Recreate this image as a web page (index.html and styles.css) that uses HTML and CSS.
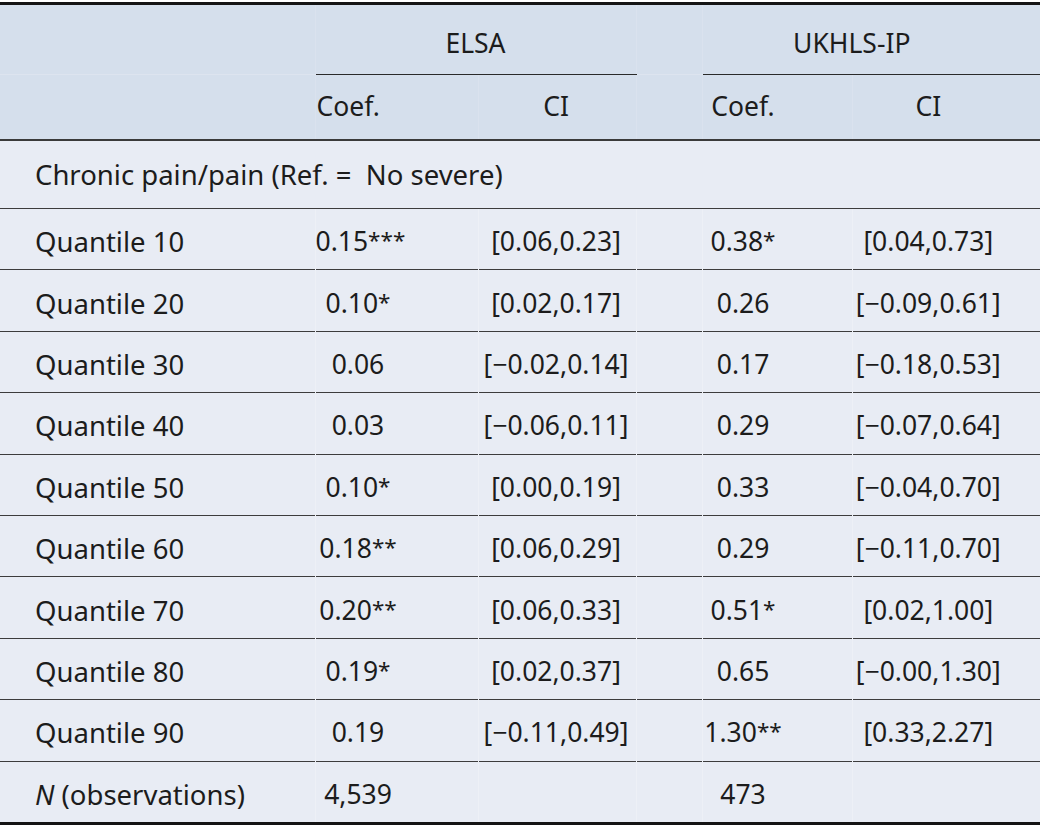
FILE: index.html
```html
<!DOCTYPE html>
<html lang="en">
<head>
<meta charset="utf-8">
<title>Quantile regression table</title>
<link rel="stylesheet" href="styles.css">
</head>
<body>
<div class="wrap">
<table class="qt">
  <colgroup>
    <col class="c-label">
    <col class="c-coef1">
    <col class="c-ci1">
    <col class="c-gap">
    <col class="c-coef2">
    <col class="c-ci2">
  </colgroup>
  <thead>
    <tr class="h1">
      <th class="blank"></th>
      <th class="grp grp1" colspan="2">ELSA</th>
      <th class="gap"></th>
      <th class="grp grp2" colspan="2">UKHLS-IP</th>
    </tr>
    <tr class="h2">
      <th class="blank"></th>
      <th class="coef1 hcoef1">Coef.</th>
      <th class="ci1">CI</th>
      <th class="gap"></th>
      <th class="coef2">Coef.</th>
      <th class="ci2 hci2">CI</th>
    </tr>
  </thead>
  <tbody>
    <tr class="section">
      <td class="label" colspan="6">Chronic pain/pain (Ref. =&nbsp; No severe)</td>
    </tr>
    <tr><td class="label">Quantile 10</td><td class="coef1">0.15<span class="sig">***</span></td><td class="ci1">[0.06,0.23]</td><td class="gap"></td><td class="coef2">0.38<span class="sig">*</span></td><td class="ci2">[0.04,0.73]</td></tr>
    <tr><td class="label">Quantile 20</td><td class="coef1">0.10<span class="sig">*</span></td><td class="ci1">[0.02,0.17]</td><td class="gap"></td><td class="coef2">0.26</td><td class="ci2">[−0.09,0.61]</td></tr>
    <tr><td class="label">Quantile 30</td><td class="coef1">0.06</td><td class="ci1">[−0.02,0.14]</td><td class="gap"></td><td class="coef2">0.17</td><td class="ci2">[−0.18,0.53]</td></tr>
    <tr><td class="label">Quantile 40</td><td class="coef1">0.03</td><td class="ci1">[−0.06,0.11]</td><td class="gap"></td><td class="coef2">0.29</td><td class="ci2">[−0.07,0.64]</td></tr>
    <tr><td class="label">Quantile 50</td><td class="coef1">0.10<span class="sig">*</span></td><td class="ci1">[0.00,0.19]</td><td class="gap"></td><td class="coef2">0.33</td><td class="ci2">[−0.04,0.70]</td></tr>
    <tr><td class="label">Quantile 60</td><td class="coef1">0.18<span class="sig">**</span></td><td class="ci1">[0.06,0.29]</td><td class="gap"></td><td class="coef2">0.29</td><td class="ci2">[−0.11,0.70]</td></tr>
    <tr><td class="label">Quantile 70</td><td class="coef1">0.20<span class="sig">**</span></td><td class="ci1">[0.06,0.33]</td><td class="gap"></td><td class="coef2">0.51<span class="sig">*</span></td><td class="ci2">[0.02,1.00]</td></tr>
    <tr><td class="label">Quantile 80</td><td class="coef1">0.19<span class="sig">*</span></td><td class="ci1">[0.02,0.37]</td><td class="gap"></td><td class="coef2">0.65</td><td class="ci2">[−0.00,1.30]</td></tr>
    <tr><td class="label">Quantile 90</td><td class="coef1">0.19</td><td class="ci1">[−0.11,0.49]</td><td class="gap"></td><td class="coef2">1.30<span class="sig">**</span></td><td class="ci2">[0.33,2.27]</td></tr>
    <tr class="last"><td class="label"><i>N</i> (observations)</td><td class="coef1">4,539</td><td class="ci1"></td><td class="gap"></td><td class="coef2">473</td><td class="ci2"></td></tr>
  </tbody>
</table>
</div>
</body>
</html>
```
FILE: styles.css
```css
html, body {
  margin: 0;
  padding: 0;
  background: #ffffff;
}

.wrap {
  padding-top: 2px;
}

.qt {
  width: 1040px;
  table-layout: fixed;
  border-collapse: collapse;
  font-family: "Noto Sans", "Open Sans", sans-serif;
  font-size: 26.5px;
  color: #1c1c1c;
  border-top: 3px solid #141414;
  border-bottom: 3px solid #141414;
}

.c-label { width: 315px; }
.c-coef1 { width: 163px; }
.c-ci1 { width: 158px; }
.c-gap { width: 66px; }
.c-coef2 { width: 150px; }
.c-ci2 { width: 188px; }

th, td {
  padding: 0;
  font-weight: normal;
  text-align: center;
  white-space: nowrap;
  line-height: 33px;
}

thead th {
  background: #d5dfec;
  border-left: 1px solid #dae2ee;
}

thead th:first-child { border-left: none; }

.h1 th {
  height: 71px;
  vertical-align: middle;
  padding-top: 8px;
  box-sizing: border-box;
}

.h1 .grp {
  border-bottom: 1px solid #2a2a2a;
}

.h1 .blank, .h1 .gap {
  border-bottom: 1px solid #dde4ef;
}

.grp1 { padding-right: 0; }
.grp2 { padding-right: 39px; }

.h2 th {
  height: 62px;
  border-bottom: 2px solid #3a3a3a;
  padding-bottom: 2px;
}

.h2 .hcoef1 {
  text-align: left;
  padding-left: 1px;
}

tbody td {
  background: #e8ecf4;
  height: 55.4px;
  border-top: 1px solid #3c3c3c;
  border-left: 1px solid #edf0f6;
  padding-top: 5px;
}

tbody td:first-child { border-left: none; }

.section td {
  height: 67px;
  border-top: none;
  padding-top: 0;
}

.label {
  text-align: left;
  padding-left: 35px;
  font-size: 27.5px;
}

.coef1 { padding-right: 77px; }
.ci1 { padding-right: 2px; }
.coef2 { padding-right: 68px; }
.ci2 { padding-right: 36px; }

.sig {
  font-size: 0.85em;
  line-height: 1;
  vertical-align: 0.12em;
}

.last td { height: 55px; }
```
